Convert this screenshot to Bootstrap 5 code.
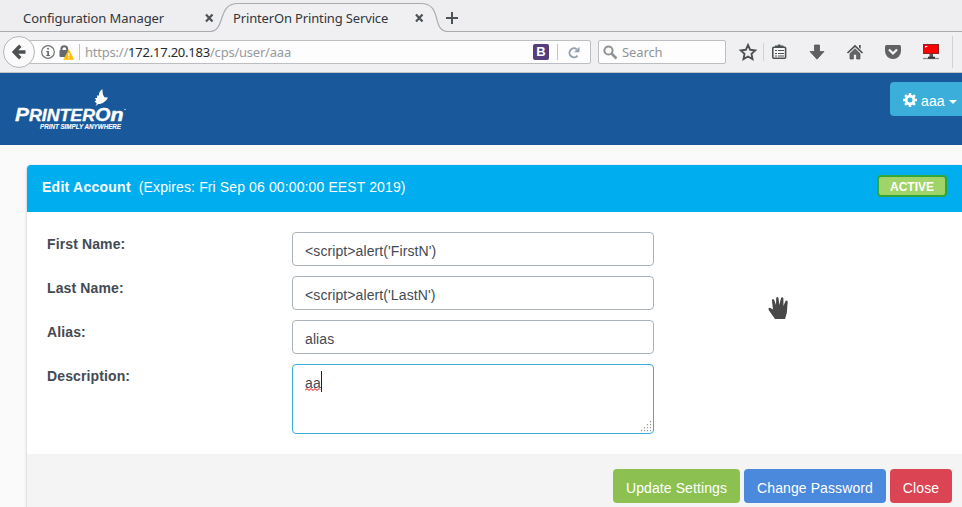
<!DOCTYPE html>
<html lang="en">
<head>
<meta charset="utf-8">
<meta name="viewport" content="width=device-width, initial-scale=1">
<title>PrinterOn Printing Service</title>
<link href="https://cdn.jsdelivr.net/npm/bootstrap@5.3.0/dist/css/bootstrap.min.css" rel="stylesheet">
<style>
body{font-family:"Liberation Sans",Arial,sans-serif;font-size:14px;line-height:20px;color:#434a54;background:#fafafa;height:507px;overflow:hidden}
svg{display:block;flex:none}
.chrome{font-family:"Noto Sans",sans-serif;font-size:13px;line-height:18px;color:#31363b;background:#f0f0f3}
.tabstrip{height:32px;background:#eeeef0}
.tab-shape{left:0;top:0}
.tab-item{padding-top:9px;height:32px;letter-spacing:-.08px}
.tab-one{width:210px;padding-left:23px}
.tab-two{width:214px;padding-left:23px;letter-spacing:-.15px}
.toolbar{height:41px;border-bottom:1px solid #c2c3c5}
.back{width:32px;height:32px;border:1px solid #b5b6b9;background:#fafafb;margin-left:3px;z-index:1}
.urlbar{width:571px;height:24px;margin-left:-15px;border:1px solid #bdbec2;border-radius:1px 2px 2px 1px;background:#fdfdfd;color:#989a9c;padding-left:20px}
.url{letter-spacing:-.22px}
.host{color:#26292c}
.searchbar{width:128px;height:24px;margin-left:7px;border:1px solid #bdbec2;border-radius:2px;background:#fdfdfd;color:#919497;letter-spacing:-.1px}
.sep{width:1px;height:16px;background:#c3c4c7;flex:none}
.sep-site{margin:0 5px 0 5px}
.sep-reload{margin:0 9px 0 8px}
.reload{margin-right:9px}
.bs-mark{width:16px;height:16px;background:#563d7c;color:#fff;border-radius:2px;font:bold 13px/16px "Liberation Sans",sans-serif}
.brandbar{height:72px;background:#19589a}
.user-btn{width:84px;height:34px;margin-top:9px;background:#3bafda;color:#fff;border-radius:4px 0 0 4px;padding:7px 12px 0 13px;margin-right:-12px;letter-spacing:.15px}
.user-name{line-height:16px}
.gear{margin-top:4px}
.drop{margin:11px 0 0 4px}
.account{margin:20px 0 0 27px;border:0;border-radius:4px 0 0 0;box-shadow:0 1px 3px rgba(0,0,0,.25);background:#fff}
.account-head{height:47px;background:#00aeef;color:#fff;padding:0 15px;border-radius:4px 0 0 0}
.head-text{padding-top:12px;letter-spacing:.12px}
.head-text b{letter-spacing:.25px}
.status{width:70px;height:22px;margin-top:10px;border:2px solid #2fa53a;border-radius:4px;background:#a0d468;font-size:12px;line-height:20px}
.account-body{height:242px;padding:20px}
.field-row{margin-bottom:10px}
.field-name{width:245px;padding-top:2px;font-weight:700;letter-spacing:.12px}
.field{width:362px;height:34px;border:1px solid #aab2bd;border-radius:4px;padding:8px 12px 4px;font-size:14px;line-height:20px;color:#434a54;box-shadow:none;letter-spacing:.1px}
.field-area{height:70px;border-color:#3bafda}
.squiggle{left:12px;top:22px}
.caret{left:28px;top:6px}
.grip{right:1px;bottom:1px}
.account-foot{height:60px;background:#f4f4f4;padding:15px 10px;gap:4px}
.act{height:34px;border:0;border-radius:4px;padding:9px 0 5px;font-size:14px;line-height:20px;color:#fff;letter-spacing:.1px}
.act-update{width:127px;background:#8cc152}
.act-pass{width:142px;background:#4a89dc}
.act-close{width:62px;background:#da4453}
.hand{left:766px;top:295px}
</style>
</head>
<body>
<div class="chrome">
  <div class="tabstrip position-relative">
    <svg class="tab-shape position-absolute" width="962" height="32" viewBox="0 0 962 32"><path d="M0 31.500H209C227 31.500 216 3.500 238 3.500H421C443 3.500 431 31.500 448 31.500H962" fill="#f0f0f3" stroke="#a9abb0" stroke-width="1.2"/></svg>
    <div class="position-relative d-flex">
      <div class="tab-item tab-one text-nowrap">Configuration Manager</div>
      <div class="tab-item tab-two text-nowrap">PrinterOn Printing Service</div>
    </div>
    <svg class="tab-shape position-absolute" width="470" height="32" viewBox="0 0 470 32" fill="none" stroke="#4d5256" stroke-width="2.2"><path d="M206 14.500l6.500 7M212.500 14.500l-6.500 7M416 14.500l6.500 7M422.500 14.500l-6.500 7"/><path d="M446 18h12M452 12v12" stroke-width="2"/></svg>
  </div>
  <div class="toolbar d-flex align-items-center">
    <div class="back rounded-circle d-flex align-items-center justify-content-center position-relative"><svg width="16" height="16" viewBox="0 0 16 16" fill="none" stroke="#4d5051" stroke-width="3.400"><path d="M14.500 8H4M9.300 1.800L3.200 8l6.100 6.200"/></svg></div>
    <div class="urlbar d-flex align-items-center">
      <svg width="14" height="14" viewBox="0 0 14 14"><circle cx="7" cy="7" r="6.300" fill="none" stroke="#707375" stroke-width="1.200"/><path d="M6.200 3h1.700v1.600H6.200zM5.300 6h2.600v4h1v1H5.300v-1h1V7h-1z" fill="#606365"/></svg>
      <svg class="ms-1" width="15" height="15" viewBox="0 0 15 15"><path d="M2.400 6V4.200a2.900 2.900 0 0 1 5.800 0V6" fill="none" stroke="#666a6e" stroke-width="2"/><rect x=".5" y="5" width="9.500" height="7" rx="1" fill="#666a6e"/><path d="M9.800 4.800l5.100 9.700H4.700z" fill="#ffbf00" stroke="#ffbf00" stroke-width=".6" stroke-linejoin="round"/><path d="M9.200 8h1.200v3.300H9.200zM9.200 12.200h1.200v1.200H9.200z" fill="#fff"/></svg>
      <span class="sep sep-site"></span>
      <span class="url text-nowrap">https://<span class="host">172.17.20.183</span>/cps/user/aaa</span>
      <span class="bs-mark ms-auto text-center">B</span>
      <span class="sep sep-reload"></span>
      <svg class="reload" width="14" height="13" viewBox="0 0 14 13"><path d="M10.500 9.600A4.500 4.500 0 1 1 9.700 3.200" fill="none" stroke="#95a3b0" stroke-width="2"/><path d="M12.500 .8v5.500H7z" fill="#95a3b0"/></svg>
    </div>
    <div class="searchbar d-flex align-items-center"><svg class="ms-1" width="15" height="15" viewBox="0 0 15 15" fill="none" stroke="#8f9192"><circle cx="5.500" cy="5.500" r="4.100" stroke-width="2"/><path d="M8.500 8.500l5 5" stroke-width="2.500"/></svg><span class="ms-1">Search</span></div>
    <svg width="236" height="40" viewBox="726 32 236 40">
      <path d="M748 45l2.200 4.800 5 .6-3.700 3.500 1 5.200-4.500-2.600-4.500 2.600 1-5.200-3.700-3.500 5-.6z" fill="none" stroke="#4d5051" stroke-width="1.900"/>
      <path d="M763.500 43v18M952.500 36v32" stroke="#d0d1d4"/>
      <path d="M775 46.700h8.500M779.200 44.500v2" stroke="#4d5051" stroke-width="2.600"/><rect x="772.800" y="47.300" width="12.800" height="11" rx="1" fill="#f6f6f6" stroke="#4d5051" stroke-width="1.600"/><path d="M775 50.500h2M775 53.500h2M775 56h2M778 50.500h6M778 53.500h6M778 56h6" stroke="#4d5051" stroke-width="1.100"/>
      <path d="M814.500 45h5v6.500h4.500l-7 7.700-7-7.700h4.500z" fill="#5e6061" stroke="#4b4d4e" stroke-width=".7"/>
      <path d="M847.500 53l7.500-7 7.500 7" fill="none" stroke="#4d5051" stroke-width="1.700"/><path d="M850 53.600l5-4.800 5 4.800V59h-3.400v-4.800h-3.200V59H850z" fill="#646667" stroke="#4b4d4e" stroke-width=".7"/><path d="M859 45h1.700v4L859 47.400z" fill="#4d5051"/>
      <path d="M886.500 45h13q1.500 0 1.500 1.500V51a8 8 0 0 1-16 0v-4.500q0-1.500 1.500-1.500z" fill="#606263"/><path d="M889 49.500l4 4 4-4" fill="none" stroke="#f5f5f5" stroke-width="2.200"/>
      <rect x="923.500" y="44.500" width="15" height="9" fill="#f00" stroke="#8b2422"/><path d="M925 48v-2h3z" fill="#fff"/><path d="M929.500 54h3.500v3h-3.500z" fill="#555"/><path d="M923 58.500h16" stroke="#888" stroke-width="1.300"/><path d="M928 57.700h7" stroke="#333" stroke-width="2"/>
    </svg>
  </div>
</div>
<nav class="brandbar d-flex justify-content-between align-items-start">
  <svg width="150" height="72" viewBox="0 73 150 72" fill="#fff" stroke="#fff" stroke-width=".3" font-family="Liberation Sans, sans-serif" font-weight="700" font-style="italic">
    <path stroke="none" d="M95.300 106.200l1.500-2.400-2.200-2.600 1.600-.6-1.200-2.500 2.200-.2-.3-2.400 2.100-.1c-.3-2.600 1-4.500 3.300-6.400l.6 5.400 1.500 2.900 3.500.2c-1.300 3.500-5.400 6.500-9.600 6.600z"/>
    <text x="15" y="120.500" font-size="18.500" textLength="14" lengthAdjust="spacingAndGlyphs">P</text>
    <text x="29" y="120.500" font-size="16" textLength="66" lengthAdjust="spacingAndGlyphs">RINTER</text>
    <text x="95" y="120.500" font-size="18" textLength="15.500" lengthAdjust="spacingAndGlyphs">O</text>
    <text x="110.500" y="120.500" font-size="18" textLength="13" lengthAdjust="spacingAndGlyphs" stroke-width=".5">n</text>
    <circle cx="125" cy="109.500" r=".5"/>
    <text x="40" y="129" stroke-width=".1" font-size="6.500" textLength="81" lengthAdjust="spacingAndGlyphs">PRINT SIMPLY ANYWHERE</text>
  </svg>
  <div class="user-btn d-flex">
    <svg class="gear" width="14" height="14" viewBox="-7 -7 14 14"><circle r="3.900" fill="none" stroke="#fff" stroke-width="2.800"/><path d="M0-7v3M0 4v3M-7 0h3M4 0h3M-4.900-4.900l2 2M2.900 2.900l2 2M4.900-4.900l-2 2M-2.900 2.900l-2 2" stroke="#fff" stroke-width="2.500"/></svg>
    <span class="user-name ms-1 mt-1">aaa</span>
    <svg class="drop" width="8" height="4" viewBox="0 0 8 4"><path d="M0 0h8L4 4z" fill="#fff"/></svg>
  </div>
</nav>
<main class="card account">
  <div class="account-head d-flex justify-content-between">
    <div class="head-text"><b>Edit Account</b><span class="ms-2">(Expires: Fri Sep 06 00:00:00 EEST 2019)</span></div>
    <div class="status text-center fw-bold">ACTIVE</div>
  </div>
  <div class="account-body">
    <div class="field-row d-flex"><label class="field-name" for="first">First Name:</label><input id="first" class="form-control field" value="&lt;script&gt;alert('FirstN')"></div>
    <div class="field-row d-flex"><label class="field-name" for="last">Last Name:</label><input id="last" class="form-control field" value="&lt;script&gt;alert('LastN')"></div>
    <div class="field-row d-flex"><label class="field-name" for="alias">Alias:</label><input id="alias" class="form-control field" value="alias"></div>
    <div class="d-flex"><span class="field-name">Description:</span><div class="form-control field field-area position-relative">aa
      <svg class="squiggle position-absolute" width="18" height="5" viewBox="0 0 18 5"><path d="M0 3.500l2-2 2 2 2-2 2 2 2-2 2 2 2-2 1 1" fill="none" stroke="#e00"/></svg>
      <svg class="caret position-absolute" width="2" height="21"><path d="M.5 0v21" stroke="#222"/></svg>
      <svg class="grip position-absolute" width="12" height="12" viewBox="0 0 12 12"><path d="M10.500 1v11M7.500 4v8M4.500 7v5M1.500 10v2" stroke="#999" stroke-width="1.200" stroke-dasharray="1.300 1.700"/></svg>
    </div></div>
  </div>
  <div class="account-foot d-flex justify-content-end">
    <button class="btn act act-update">Update Settings</button>
    <button class="btn act act-pass">Change Password</button>
    <button class="btn act act-close">Close</button>
  </div>
</main>
<svg class="hand position-absolute" width="26" height="28" viewBox="0 0 26 28"><path d="M9 24L3 15.500q-1.400-3 1-2.800L7 14.500 5.900 5.200Q6.500 3 8 4.600L10 10l.2-7q1-2 2.300 0l.8 7L15 3q1.500-1.800 2.400.3L17.500 11l2-5q1.700-1.300 2.200.7L20.800 18l-1.800 6z" fill="#484848" stroke="#fff" stroke-width="1.200" paint-order="stroke"/></svg>
<script src="https://cdn.jsdelivr.net/npm/bootstrap@5.3.0/dist/js/bootstrap.bundle.min.js"></script>
</body>
</html>
